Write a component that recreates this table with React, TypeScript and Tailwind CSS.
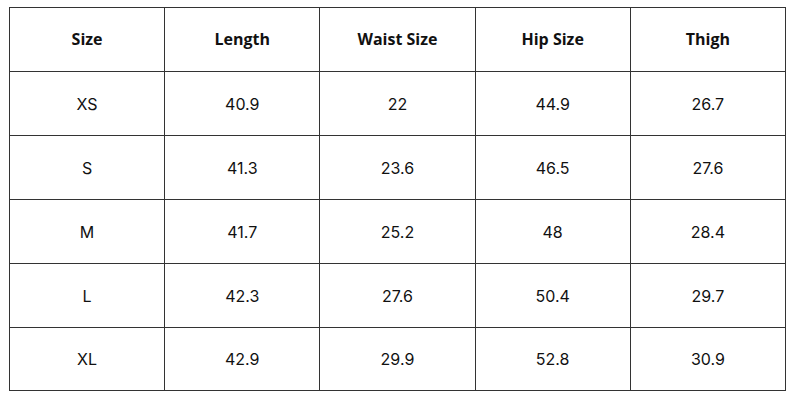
import React from 'react';

const headers = ['Size', 'Length', 'Waist Size', 'Hip Size', 'Thigh'];

const rows = [
  ['XS', '40.9', '22', '44.9', '26.7'],
  ['S', '41.3', '23.6', '46.5', '27.6'],
  ['M', '41.7', '25.2', '48', '28.4'],
  ['L', '42.3', '27.6', '50.4', '29.7'],
  ['XL', '42.9', '29.9', '52.8', '30.9'],
];

export default function App() {
  return (
    <div className="w-[800px] h-[400px] bg-white pt-[7px] pl-[9px]">
      <table className="border-collapse table-fixed w-[777px] text-[#111]">
        <thead>
          <tr className="h-[64px]">
            {headers.map((h) => (
              <th
                key={h}
                className="w-[155px] border border-[#333] text-center text-[16px] font-bold font-['Open_Sans',sans-serif] pb-[2px]"
              >
                {h}
              </th>
            ))}
          </tr>
        </thead>
        <tbody>
          {rows.map((r, ri) => (
            <tr key={r[0]} className={ri === rows.length - 1 ? 'h-[63px]' : 'h-[64px]'}>
              {r.map((c, i) => (
                <td
                  key={i}
                  className="border border-[#333] text-center text-[16px] font-['Inter',sans-serif]"
                >
                  {c}
                </td>
              ))}
            </tr>
          ))}
        </tbody>
      </table>
    </div>
  );
}
